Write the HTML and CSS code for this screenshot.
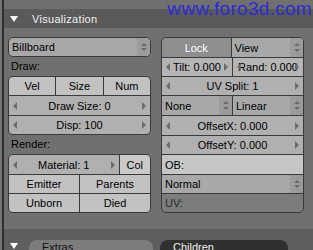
FILE: index.html
```html
<!DOCTYPE html>
<html lang="en">
<head>
  <meta charset="UTF-8">
  <title>Particle Visualization</title>
  <link rel="stylesheet" href="styles.css">
</head>
<body>
  <div class="watermark">www.foro3d.com</div>
  <div class="window">
    <div class="panel-header">
      <span class="tri"></span>
      <span class="title">Visualization</span>
    </div>

    <div class="panel-body">
      <!-- left column -->
      <div class="col">
        <div class="btn menu solo">Billboard<span class="updown"></span></div>
        <div class="label">Draw:</div>
        <div class="group">
          <div class="row r19">
            <div class="btn light c">Vel</div>
            <div class="btn light c">Size</div>
            <div class="btn light c">Num</div>
          </div>
          <div class="row r20"><div class="btn num">Draw Size: 0</div></div>
          <div class="row r19"><div class="btn num">Disp: 100</div></div>
        </div>
        <div class="label">Render:</div>
        <div class="group">
          <div class="row r20">
            <div class="btn num grow3">Material: 1</div>
            <div class="btn lighter c col-btn">Col</div>
          </div>
          <div class="row r19">
            <div class="btn light c">Emitter</div>
            <div class="btn light c">Parents</div>
          </div>
          <div class="row r19">
            <div class="btn light c">Unborn</div>
            <div class="btn light c">Died</div>
          </div>
        </div>
      </div>

      <!-- right column -->
      <div class="col">
        <div class="group">
          <div class="row r20">
            <div class="btn dark c">Lock</div>
            <div class="btn menu">View<span class="updown"></span></div>
          </div>
          <div class="row r19">
            <div class="btn num tight">Tilt: 0.000</div>
            <div class="btn num tight">Rand: 0.000</div>
          </div>
          <div class="row r19"><div class="btn num">UV Split: 1</div></div>
          <div class="row r20">
            <div class="btn menu">None<span class="updown"></span></div>
            <div class="btn menu">Linear<span class="updown"></span></div>
          </div>
          <div class="row r20"><div class="btn num">OffsetX: 0.000</div></div>
          <div class="row r19"><div class="btn num">OffsetY: 0.000</div></div>
          <div class="row r20"><div class="btn text">OB:</div></div>
          <div class="row r19"><div class="btn menu">Normal<span class="updown"></span></div></div>
          <div class="row r19"><div class="btn text dim">UV:</div></div>
        </div>
      </div>
    </div>

    <div class="panel-header next">
      <span class="tri"></span>
      <span class="tab extras">Extras</span>
      <span class="tab children">Children</span>
    </div>
  </div>
</body>
</html>
```

FILE: styles.css
```css
html, body {
  margin: 0;
  padding: 0;
}

body {
  width: 313px;
  height: 250px;
  overflow: hidden;
  background: #747474;
  font-family: "Liberation Sans", Arial, sans-serif;
  font-size: 11px;
  color: #000;
  position: relative;
}

.watermark {
  position: absolute;
  top: 0;
  right: 1px;
  font-size: 19px;
  line-height: 17px;
  color: #2b2bd6;
  letter-spacing: 0.3px;
  z-index: 2;
}

.window {
  margin-left: 2px;
  border-left: 2px solid #2e2e2e;
  height: 250px;
  padding-top: 9px;
  box-sizing: border-box;
  background: #707070;
}

.panel-header {
  height: 19px;
  background: #5a5a5a;
  display: flex;
  align-items: center;
  color: #f0f0f0;
}

.tri {
  width: 0;
  height: 0;
  margin-left: 6px;
  border-left: 4px solid transparent;
  border-right: 4px solid transparent;
  border-top: 6px solid #fff;
}

.title {
  margin-left: 14px;
  letter-spacing: 0.3px;
}

.panel-body {
  display: flex;
  gap: 10px;
  padding: 9px 9px 0 4px;
  height: 192px;
  box-sizing: border-box;
}

.col {
  width: 143px;
  display: flex;
  flex-direction: column;
}

.label {
  height: 19px;
  padding-left: 3px;
  display: flex;
  align-items: flex-end;
  padding-bottom: 4px;
  box-sizing: border-box;
}

.group {
  border: 1px solid #3a3a3a;
  border-radius: 5px;
  overflow: hidden;
  background: #3a3a3a;
  display: flex;
  flex-direction: column;
  gap: 1px;
}

.row {
  display: flex;
  gap: 1px;
}

.r19 { height: 18px; }
.r20 { height: 19px; }

.btn {
  flex: 1;
  display: flex;
  align-items: center;
  position: relative;
  background: #b0b0b0;
  padding-left: 3px;
  white-space: nowrap;
  overflow: hidden;
}

.btn.c {
  justify-content: center;
  padding-left: 0;
}

.btn.light { background: #c2c2c2; }
.btn.lighter { background: #cacaca; }
.btn.dark { background: #8e8e8e; color: #fff; }
.btn.text { background: #c6c6c6; }
.btn.text.dim { background: #7c7c7c; color: #2a2a2a; }

.grow3 { flex: 3.6; }
.col-btn { flex: 1; }

.solo {
  flex: none;
  height: 18px;
  border: 1px solid #3a3a3a;
  border-radius: 5px;
}

.menu {
  background: #a8a8a8;
}

.updown {
  position: absolute;
  right: 0;
  top: 0;
  bottom: 0;
  width: 13px;
  background: #9b9b9b;
}

.updown::before,
.updown::after {
  content: "";
  position: absolute;
  left: 4px;
  border-left: 3px solid transparent;
  border-right: 3px solid transparent;
}

.updown::before {
  top: 5px;
  border-bottom: 3px solid #6a6a6a;
}

.updown::after {
  bottom: 5px;
  border-top: 3px solid #6a6a6a;
}

.num {
  justify-content: center;
  padding-left: 0;
}

.num::before,
.num::after {
  content: "";
  position: absolute;
  top: 50%;
  margin-top: -4px;
  border-top: 4px solid transparent;
  border-bottom: 4px solid transparent;
}

.num::before {
  left: 4px;
  border-right: 4px solid #6c6c6c;
}

.num::after {
  right: 4px;
  border-left: 4px solid #6c6c6c;
}

.num.tight {
  background: #b5b5b5;
}

.next {
  margin-top: 9px;
  height: 30px;
  background: #5e5e5e;
  align-items: flex-start;
  padding-top: 11px;
  box-sizing: border-box;
}

.next .tri {
  margin-top: 3px;
}

.tab {
  height: 20px;
  border-radius: 8px 8px 0 0;
  padding-left: 13px;
  box-sizing: border-box;
  padding-top: 1px;
}

.extras {
  margin-left: 11px;
  width: 124px;
  background: #7c7c7c;
  color: #111;
}

.children {
  margin-left: 7px;
  width: 128px;
  background: #303030;
  color: #f0f0f0;
}
```
